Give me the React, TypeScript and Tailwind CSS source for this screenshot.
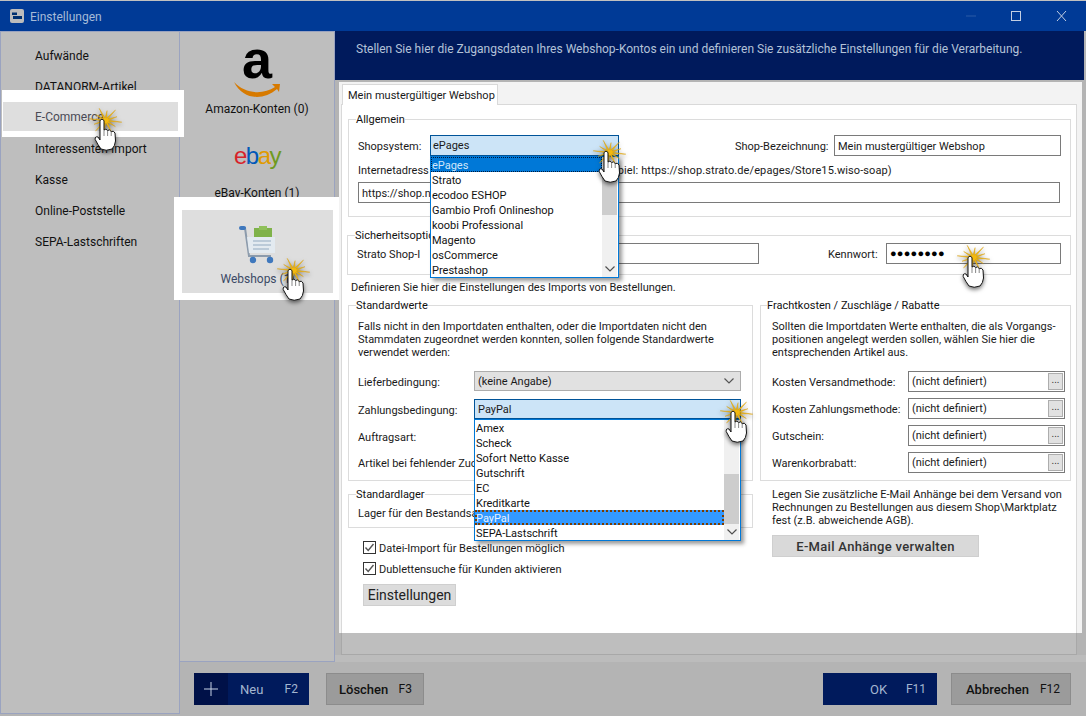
import React from "react";

const starPoints = (() => {
  const cx = 16.5, cy = 12.5, n = 12;
  const pts: string[] = [];
  for (let i = 0; i < n * 2; i++) {
    const a = (Math.PI * i) / n + 0.13;
    const r = i % 2 === 0 ? (i % 4 === 0 ? 16.5 : 12.5) : 3.2;
    pts.push(`${(cx + Math.cos(a) * r).toFixed(1)},${(cy + Math.sin(a) * r * 0.8).toFixed(1)}`);
  }
  return pts.join(" ");
})();

function Hand({ x, y }: { x: number; y: number }) {
  return (
    <svg
      width="33"
      height="44"
      viewBox="0 0 33 44"
      className="absolute z-30 drop-shadow-[0_2px_2px_rgba(0,0,0,0.55)]"
      style={{ left: x, top: y }}
    >
      <polygon points={starPoints} fill="#f2b90f" stroke="#d69a00" strokeWidth="0.4" />
      <path
        d="M11 12.5 Q13 9.5 15 12.5 L15 22 Q17 20 18.6 22.5 Q20.6 20.8 22.2 23.6 Q24.6 22.2 26 25 L26.5 33 Q26 38 23 41 Q17 43.5 12 41 Q9 37 6.2 31.5 Q5.8 28 9 29 L11 32 Z"
        fill="#fff"
        stroke="#111"
        strokeWidth="1"
        strokeLinejoin="round"
      />
      <path d="M18.6 22.5 V28 M22.2 23.6 V28 M15 22 V28" stroke="#555" strokeWidth="0.7" fill="none" />
    </svg>
  );
}

function Chevron({ c = "#555" }: { c?: string }) {
  return (
    <svg width="10" height="6" viewBox="0 0 10 6" className="shrink-0">
      <path d="M0.5 0.5 L5 5 L9.5 0.5" fill="none" stroke={c} strokeWidth="1.2" />
    </svg>
  );
}

function Field({ className, children }: { className: string; children?: React.ReactNode }) {
  return (
    <div className={`h-[21px] border border-[#7a7a7a] bg-white pl-[3px] flex items-center whitespace-nowrap overflow-hidden ${className}`}>
      {children}
    </div>
  );
}

function Group({ title, className, legendClass = "-ml-[2px]", children }: { title: string; className: string; legendClass?: string; children: React.ReactNode }) {
  return (
    <fieldset className={`border border-[#dcdcdc] ${className}`}>
      <legend className={`h-[16px] leading-[18px] text-[#111] whitespace-nowrap ${legendClass}`}>{title}</legend>
      {children}
    </fieldset>
  );
}

function ListPanel({
  items,
  selected,
  thumbTop,
  thumbH,
  selClass,
}: {
  items: string[];
  selected: string;
  thumbTop: string;
  thumbH: string;
  selClass: string;
}) {
  return (
    <div className="absolute -left-px -right-px top-[calc(100%+1px)] z-20 h-[122px] border border-[#0078d7] bg-white shadow-[3px_3px_4px_rgba(0,0,0,0.4)] flex text-[#111]">
      <div className="flex-1 min-w-0">
        {items.map((t) => (
          <div
            key={t}
            className={`h-[15px] leading-[17px] pl-[1px] whitespace-nowrap ${t === selected ? selClass : ""}`}
          >
            {t}
          </div>
        ))}
      </div>
      <div className="relative w-[15px] mr-[1px] bg-[#f0f0f0] flex flex-col items-center justify-end pb-[5px]">
        <div className={`absolute left-0 right-0 bg-[#cdcdcd] ${thumbTop} ${thumbH}`} />
        <Chevron c="#505050" />
      </div>
    </div>
  );
}

function CostRow({ label }: { label: string }) {
  return (
    <div className="flex items-center h-[20px] whitespace-nowrap">
      <div className="w-[136px] pt-[2px]">{label}</div>
      <div className="w-[157px] h-[21px] border border-[#7a7a7a] bg-white flex items-center pl-[3px] pr-[1px]">
        <span className="flex-1 pt-[1px]">(nicht definiert)</span>
        <span className="w-[15px] h-[17px] border border-[#adadad] bg-[#e1e1e1] text-[10px] leading-[11px] text-center text-[#333]">...</span>
      </div>
    </div>
  );
}

function Check({ label, className }: { label: string; className: string }) {
  return (
    <div className={`flex items-center h-[14px] ${className}`}>
      <svg width="13" height="13" viewBox="0 0 13 13" className="mr-[3px] shrink-0">
        <rect x="0.5" y="0.5" width="12" height="12" fill="#fff" stroke="#333" />
        <path d="M2.5 6.5 L5.2 9.5 L10.5 3" fill="none" stroke="#555" strokeWidth="1.4" />
      </svg>
      <span className="pt-[2px]">{label}</span>
    </div>
  );
}

function BottomBtn({ label, fkey, dark, className, labelClass, children }: { label: string; fkey: string; dark?: boolean; className: string; labelClass: string; children?: React.ReactNode }) {
  return (
    <div
      className={`h-[32px] flex items-center text-[13px] ${
        dark ? "bg-[#001a5c] text-[#a3b6d0]" : "bg-[#9b9b9b] border border-[#8c8c8c] text-[#111] font-medium"
      } ${className}`}
    >
      {children}
      <span className={labelClass}>{label}</span>
      <span className="text-[12px] font-normal ml-auto">{fkey}</span>
    </div>
  );
}

export default function App() {
  return (
    <div className="relative w-[1086px] h-[716px] overflow-hidden bg-[#b4b4b4] text-[11px] leading-[13px] text-[#1a1a1a] font-['Roboto',sans-serif] flex flex-col border-t border-[#c0c0c0]">
      {/* title bar */}
      <div className="h-[30px] shrink-0 bg-[#003a96] flex items-center pl-[10px] pr-[19px] text-[#a6bbd8] text-[12px]">
        <svg width="14" height="14" viewBox="0 0 14 14" className="mr-[6px]">
          <rect width="14" height="14" rx="2" fill="#bcbcbc" />
          <path d="M2 3.5 H7 V6 H2 Z M3 7 H12 V10 H3 Z" fill="#00306f" />
        </svg>
        <span className="pt-[2px]">Einstellungen</span>
        <svg width="101" height="12" viewBox="0 0 101 12" className="ml-auto">
          <path d="M0 6 H10" stroke="#2a5aa6" strokeWidth="1" />
          <rect x="45.5" y="1.5" width="9" height="9" fill="none" stroke="#c2cee2" />
          <path d="M91 1 L100 11 M100 1 L91 11" stroke="#c2cee2" strokeWidth="1" />
        </svg>
      </div>

      <div className="flex flex-1 min-h-0">
        {/* navigation */}
        <div className="w-[180px] h-[683px] border border-[#9aa3c0] bg-[#bebebe] pt-[9px] pl-[34px] text-[12px] text-[#111]">
          {["Aufwände", "DATANORM-Artikel", "E-Commerce", "Interessenten-Import", "Kasse", "Online-Poststelle", "SEPA-Lastschriften"].map((t) => (
            <div key={t} className="h-[31px] flex items-center">{t}</div>
          ))}
        </div>

        <div className="flex-1 min-w-0 flex flex-col">
          <div className="flex h-[631px]">
            {/* sub navigation */}
            <div className="w-[155px] h-[631px] border border-l-0 border-[#9aa3c0] bg-[#bebebe] flex flex-col items-center text-[12px] text-[#111]">
              <div className="h-[85px] w-full flex flex-col items-center pt-[4px]">
                <span className="font-['Liberation_Sans',sans-serif] font-bold text-[54px] leading-[46px] text-black">a</span>
                <svg width="48" height="20" viewBox="0 0 48 20" className="-mt-[1px]">
                  <path d="M1 1 C12 13 30 14 42 6 L39 3 L47 3 L46 11 L44 8 C30 20 10 19 1 1 Z" fill="#d77a00" />
                </svg>
                <span className="mt-[2px]">Amazon-Konten (0)</span>
              </div>
              <div className="w-full flex flex-col items-center pt-[25px]">
                <div className="font-['Liberation_Sans',sans-serif] text-[24px] leading-[28px] tracking-[-1.5px]">
                  <span className="text-[#d8232a]">e</span>
                  <span className="text-[#0058b8]">b</span>
                  <span className="text-[#e09a00]">a</span>
                  <span className="text-[#6f9a1e]">y</span>
                </div>
                <span className="mt-[17px]">eBay-Konten (1)</span>
              </div>
            </div>

            {/* main */}
            <div className="flex-1 min-w-0 flex flex-col">
              <div className="h-[49px] shrink-0 mr-[2px] bg-[#001a5c] pl-[21px] pt-[12px] text-[#b3c2d8] text-[12px] whitespace-nowrap">
                Stellen Sie hier die Zugangsdaten Ihres Webshop-Kontos ein und definieren Sie zusätzliche Einstellungen für die Verarbeitung.
              </div>
              <div className="h-[2px] shrink-0" />
              <div className="h-[551px] shrink-0 ml-[4px] mr-[4px] bg-[#f3f3f3] flex flex-col">
                <div className="h-[22px] shrink-0 pt-[2px] pl-[3px]">
                  <div className="relative z-10 w-[156px] h-[21px] border border-b-0 border-[#d9d9d9] bg-white pl-[5px] pt-[4px] whitespace-nowrap">Mein mustergültiger Webshop</div>
                </div>
                <div className="flex-1 ml-[2px] mr-[5px] border border-b-0 border-[#d9d9d9] bg-white pl-[6px] pt-[6px]">
                  <div className="w-[723px]">
                    <Group title="Allgemein" className="pl-[9px] pr-[9px] pb-[13px]">
                      <div className="flex items-center mt-[8px] h-[21px] whitespace-nowrap">
                        <span className="w-[72px] pt-[2px]">Shopsystem:</span>
                        <div className="relative w-[189px] h-[21px] border border-[#005499] bg-[#cce4f7] pl-[2px] flex items-center">
                          ePages
                          <ListPanel
                            items={["ePages", "Strato", "ecodoo ESHOP", "Gambio Profi Onlineshop", "koobi Professional", "Magento", "osCommerce", "Prestashop"]}
                            selected="ePages"
                            thumbTop="top-[16px]"
                            thumbH="h-[42px]"
                            selClass="bg-[#0078d7] text-[#cfe6fa] outline-1 outline-dotted outline-offset-[-1px] outline-[#001a3c]"
                          />
                        </div>
                        <span className="ml-[116px] w-[99px] pt-[2px]">Shop-Bezeichnung:</span>
                        <Field className="w-[227px] pt-[2px]">Mein mustergültiger Webshop</Field>
                      </div>
                      <div className="mt-[6px] h-[14px] pt-[3px] whitespace-nowrap flex items-center">
                        <span className="w-[264px] -mr-[10px]">Internetadress</span>
                        <span className="tracking-[0.1px]">spiel: https://shop.strato.de/epages/Store15.wiso-soap)</span>
                      </div>
                      <Field className="mt-[6px] w-[702px] pt-[2px]">https://shop.n</Field>
                    </Group>

                    <Group title="Sicherheitsoptio" className="mt-[10px] -ml-[1px] pl-[9px] pr-[9px] pb-[10px]">
                      <div className="flex items-center h-[21px] whitespace-nowrap">
                        <span className="w-[75px] pt-[2px]">Strato Shop-I</span>
                        <Field className="w-[327px]" />
                        <span className="ml-[69px] w-[58px] pt-[2px]">Kennwort:</span>
                        <Field className="w-[175px] text-[11px] tracking-[0.2px] text-black">●●●●●●●●</Field>
                      </div>
                    </Group>

                    <div className="mt-[4px] ml-[3px] h-[14px] pt-[2px] flex items-center">Definieren Sie hier die Einstellungen des Imports von Bestellungen.</div>

                    <div className="flex mt-[4px]">
                      <div className="w-[405px] shrink-0">
                        <Group title="Standardwerte" className="pl-[9px] pb-[8px] h-[184px]">
                          <p className="mt-[7px]">Falls nicht in den Importdaten enthalten, oder die Importdaten nicht den<br />Stammdaten zugeordnet werden konnten, sollen folgende Standardwerte<br />verwendet werden:</p>
                          <div className="flex items-center mt-[12px] h-[20px]">
                            <span className="w-[116px] pt-[2px]">Lieferbedingung:</span>
                            <div className="w-[267px] h-[20px] border border-[#adadad] bg-[#e1e1e1] pl-[3px] pr-[6px] flex items-center justify-between">
                              (keine Angabe)
                              <Chevron />
                            </div>
                          </div>
                          <div className="flex items-center mt-[8px] h-[20px]">
                            <span className="w-[116px] pt-[2px]">Zahlungsbedingung:</span>
                            <div className="relative w-[267px] h-[20px] border border-[#005499] bg-[#cce4f7] pl-[3px] flex items-center">
                              PayPal
                              <ListPanel
                                items={["Amex", "Scheck", "Sofort Netto Kasse", "Gutschrift", "EC", "Kreditkarte", "PayPal", "SEPA-Lastschrift"]}
                                selected="PayPal"
                                thumbTop="top-[54px]"
                                thumbH="h-[50px]"
                                selClass="bg-[#3399ff] text-[#e6f2ff] outline-2 outline-dotted outline-offset-[-2px] outline-[#7a3c00]"
                              />
                            </div>
                          </div>
                          <div className="flex items-center mt-[7px] h-[20px] pt-[2px]">Auftragsart:</div>
                          <div className="flex items-center mt-[6px] h-[20px] pt-[2px] whitespace-nowrap">Artikel bei fehlender Zuo</div>
                        </Group>
                        <Group title="Standardlager" className="mt-[5px] pl-[9px] pb-[7px]">
                          <div className="mt-[4px] h-[14px] pt-[1px] flex items-center whitespace-nowrap">Lager für den Bestandsa</div>
                        </Group>
                        <Check label="Datei-Import für Bestellungen möglich" className="mt-[12px] ml-[15px]" />
                        <Check label="Dublettensuche für Kunden aktivieren" className="mt-[7px] ml-[15px]" />
                        <button className="mt-[9px] ml-[15px] w-[93px] h-[22px] bg-[#dcdcdc] border border-[#cfcfcf] text-[14px] text-[#222]">Einstellungen</button>
                      </div>

                      <div className="w-[311px] ml-[7px] shrink-0">
                        <Group title="Frachtkosten / Zuschläge / Rabatte" className="pl-[11px] h-[184px]" legendClass="-ml-[5px]">
                          <p className="mt-[7px] whitespace-nowrap">Sollten die Importdaten Werte enthalten, die als Vorgangs-<br />positionen angelegt werden sollen, wählen Sie hier die<br />entsprechenden Artikel aus.</p>
                          <div className="flex flex-col gap-[7px] mt-[12px]">
                            <CostRow label="Kosten Versandmethode:" />
                            <CostRow label="Kosten Zahlungsmethode:" />
                            <CostRow label="Gutschein:" />
                            <CostRow label="Warenkorbrabatt:" />
                          </div>
                        </Group>
                        <p className="mt-[7px] ml-[12px] whitespace-nowrap">Legen Sie zusätzliche E-Mail Anhänge bei dem Versand von<br />Rechnungen zu Bestellungen aus diesem Shop\Marktplatz<br />fest (z.B. abweichende AGB).</p>
                        <button className="mt-[8px] ml-[12px] w-[207px] h-[22px] pt-[1px] bg-[#d9d9d9] border border-[#cfcfcf] text-[13px] font-medium text-[#333] tracking-[0.3px]">E-Mail Anhänge verwalten</button>
                      </div>
                    </div>
                  </div>
                </div>
              </div>
              <div className="h-[22px] ml-[6px] mr-[9px] border border-t-0 border-[#a8a8a8] bg-[#bebebe] shrink-0" />
              <div className="flex-1 bg-[#bcbcbc]" />
            </div>
          </div>

          {/* bottom buttons */}
          <div className="flex items-center pl-[14px] pr-[15px] pt-[11px]">
            <BottomBtn label="Neu" fkey="F2" dark className="w-[115px] pr-[11px]" labelClass="ml-[12px]">
              <span className="w-[34px] h-full bg-[#001148] flex items-center justify-center shrink-0">
                <svg width="14" height="14" viewBox="0 0 14 14"><path d="M7 0 V14 M0 7 H14" stroke="#c8d4e6" strokeWidth="1" /></svg>
              </span>
            </BottomBtn>
            <BottomBtn label="Löschen" fkey="F3" className="w-[98px] ml-[17px] pr-[11px]" labelClass="ml-[12px]" />
            <BottomBtn label="OK" fkey="F11" dark className="w-[114px] ml-auto pr-[11px]" labelClass="ml-[47px]" />
            <BottomBtn label="Abbrechen" fkey="F12" className="w-[120px] ml-[14px] pr-[10px]" labelClass="ml-[14px]" />
          </div>
        </div>
      </div>

      {/* annotation highlights */}
      <div className="absolute left-[2px] top-[89px] w-[182px] h-[47px] pt-[2px] border-t-[12px] border-b-[6px] border-l-[1px] border-r-[6px] border-white bg-[#dedede] pl-[32px] flex items-center text-[12px] text-[#4a4a55]">E-Commerce</div>
      <div className="absolute left-[174px] top-[196px] w-[165px] h-[103px] border-t-[13px] border-b-[7px] border-l-[8px] border-r-[6px] border-white bg-[#dedede] flex flex-col items-center pt-[16px] text-[12px] text-[#3b4a66]">
        <svg width="38" height="38" viewBox="0 0 38 38">
          <rect x="15" y="2" width="18" height="9" fill="#7fb24a" />
          <rect x="20" y="0" width="8" height="4" fill="#8fc05a" />
          <path d="M1 2 H6 L10 30 H32" fill="none" stroke="#8c9bac" strokeWidth="2" />
          <rect x="0" y="0" width="7" height="4" rx="2" fill="#3f78bd" />
          <path d="M8 11 H36 V27 H10 Z" fill="#e3eaf0" />
          <path d="M14 15 H32 M14 19 H32 M14 23 H30" stroke="#93a9bf" strokeWidth="1.2" />
          <circle cx="14" cy="34" r="3.2" fill="#3f78bd" />
          <circle cx="31" cy="34" r="3.2" fill="#3f78bd" />
        </svg>
        <span className="mt-[9px]">Webshops (1)</span>
      </div>

      <Hand x={89} y={107} />
      <Hand x={277} y={257} />
      <Hand x={593} y={139} />
      <Hand x={957} y={244} />
      <Hand x={720} y={399} />
    </div>
  );
}
